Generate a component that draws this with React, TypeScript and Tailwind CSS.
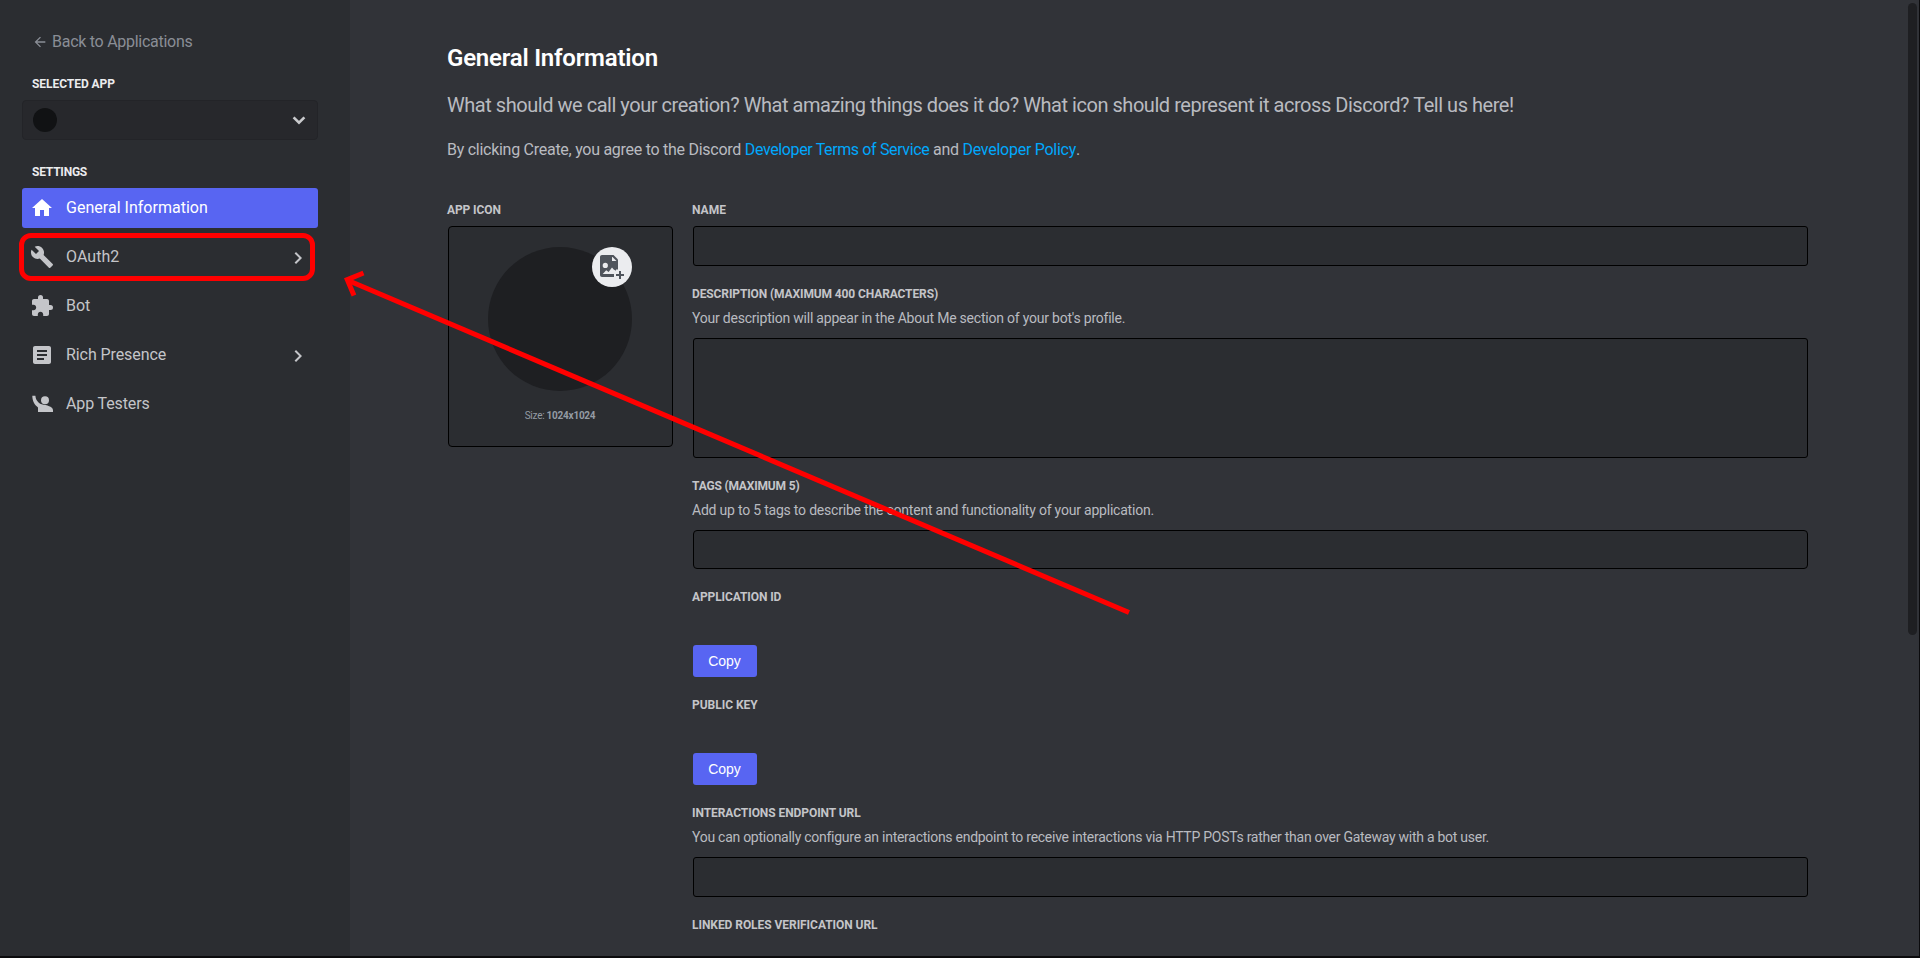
import type { ReactNode } from "react";
import { MdArrowBack, MdArticle, MdBuild, MdChevronRight, MdExtension, MdHome } from "react-icons/md";

function AppTestersIcon() {
  return (
    <svg viewBox="0 0 24 24" className="size-6" fill="currentColor">
      <circle cx="15" cy="8.2" r="4" />
      <path d="M2.3 3.8H5.4C5.6 8.2 8.6 12 13.5 12.8C19.5 13.6 23 15.6 23 18.3V20H8V15.4C4.4 13 2.3 8.6 2.3 3.8Z" />
    </svg>
  );
}

function ImagePlusIcon() {
  return (
    <svg viewBox="0 0 24 24" className="size-6">
      <path
        fill="#4f545c"
        fillRule="evenodd"
        d="M2 0H12V6H18V14.5H16V16H14V22H2C.9 22 0 21.1 0 20V2C0 .9.9 0 2 0ZM5.3 7.8A2.6 2.6 0 1 0 5.3 13A2.6 2.6 0 1 0 5.3 7.8ZM2.7 19H14V16L16 15.8L13.7 14.6L12 12.6L8.6 17L6.2 15.2Z"
      />
      <path fill="#4f545c" d="M12 0H13.5L18 4.5V6H16.5L12 1.5Z" />
      <path fill="#4f545c" d="M19 16H21V19H24V21H21V24H19V21H16V19H19Z" />
    </svg>
  );
}

function NavItem({ icon, label, active, arrow }: { icon: ReactNode; label: ReactNode; active?: boolean; arrow?: boolean }) {
  return (
    <a
      className={
        active
          ? "flex h-10 items-center rounded-[3px] bg-[#5865f2] pl-2 text-white"
          : "flex h-10 items-center rounded-[3px] pl-2 text-[#c4c5c9]"
      }
    >
      <span className="flex size-6">{icon}</span>
      <span className="ml-3 flex-1 text-base leading-5">{label}</span>
      {arrow && <MdChevronRight className="mr-2 mt-0.5 size-6" />}
    </a>
  );
}

function Label({ children }: { children: ReactNode }) {
  return <div className="-ml-px h-4 text-xs leading-4 font-bold whitespace-nowrap text-[#c4c5c9]">{children}</div>;
}

function Helper({ children }: { children: ReactNode }) {
  return <p className="-ml-px mt-2 h-4 text-sm leading-4 whitespace-nowrap text-[#b9bbc0]">{children}</p>;
}

function CopyField({ label }: { label: ReactNode }) {
  return (
    <div>
      <Label>{label}</Label>
      <button className="mt-10 block h-8 w-16 rounded-[3px] bg-[#5865f2] pr-px font-['Liberation_Sans',sans-serif] text-sm text-white">
        Copy
      </button>
    </div>
  );
}

export default function App() {
  return (
    <div className="relative flex h-[958px] w-[1920px] overflow-hidden border-r border-b-2 border-[#0b0b0d] bg-[#313338] font-[Roboto,sans-serif]">
      <aside className="w-[350px] shrink-0 bg-[#2b2d31] pr-8 pl-[22px] pt-8">
        <a className="flex h-5 items-center pl-2.5 text-base leading-5 text-[#8a8e96]">
          <MdArrowBack className="size-4" />
          <span className="ml-1 tracking-[-0.27px]">Back to Applications</span>
        </a>
        <h2 className="mt-6 ml-2.5 h-4 text-xs leading-4 font-bold tracking-[-0.05px] text-[#ebecee]">SELECTED APP</h2>
        <div className="mt-2 flex h-10 items-center justify-between rounded border border-[#232428] bg-[#27282c] pr-[11px] pl-2.5">
          <span className="size-6 rounded-full bg-[#111214]" />
          <svg viewBox="0 0 14 9" className="h-[9px] w-3.5" fill="none" stroke="#c9cacd" strokeWidth="2.6">
            <path d="M1.6 1.3L7 6.7L12.4 1.3" />
          </svg>
        </div>
        <h2 className="mt-6 ml-2.5 h-4 text-xs leading-4 font-bold tracking-[-0.22px] text-[#ebecee]">SETTINGS</h2>
        <nav className="mt-2 flex flex-col gap-[9px]">
          <NavItem active icon={<MdHome className="size-6" />} label={<span className="tracking-[0.02px]">General Information</span>} />
          <NavItem arrow icon={<MdBuild className="size-6" />} label={<span className="tracking-[0.06px]">OAuth2</span>} />
          <NavItem icon={<MdExtension className="size-6" />} label="Bot" />
          <NavItem arrow icon={<MdArticle className="size-6" />} label={<span className="tracking-[-0.08px]">Rich Presence</span>} />
          <NavItem icon={<AppTestersIcon />} label={<span className="tracking-[-0.13px]">App Testers</span>} />
        </nav>
      </aside>

      <main className="min-w-0 flex-1 pt-11 pr-[111px] pl-[98px]">
        <h1 className="-ml-px h-7 text-2xl leading-7 font-semibold tracking-[-0.22px] text-white">General Information</h1>
        <p className="-ml-px mt-[21px] h-6 text-xl leading-6 tracking-[-0.465px] whitespace-nowrap text-[#b9bbc0]">
          What should we call your creation? What amazing things does it do? What icon should represent it across Discord? Tell us here!
        </p>
        <p className="-ml-px mt-[23px] h-5 text-base leading-5 tracking-[-0.27px] whitespace-nowrap text-[#b9bbc0]">
          By clicking Create, you agree to the Discord <a className="tracking-[-0.37px] text-[#00a8fc]">Developer Terms of Service</a> and{" "}
          <a className="tracking-[-0.265px] text-[#00a8fc]">Developer Policy</a>.
        </p>

        <div className="mt-[42px] flex">
          <section className="w-[225px] shrink-0">
            <Label><span className="tracking-[-0.1px]">APP ICON</span></Label>
            <div className="mt-2 flex h-[221px] flex-col items-center rounded border border-black bg-[#2b2d31] pt-5 pr-px">
              <div className="relative size-36 rounded-full bg-[#1e1f22]">
                <div className="absolute top-0 right-0 flex size-10 items-center justify-center rounded-full bg-[#ebecef]">
                  <ImagePlusIcon />
                </div>
              </div>
              <p className="mt-[17px] h-4 text-[10px] leading-4 tracking-[-0.25px] text-[#949ba4]">
                Size: <b>1024x1024</b>
              </p>
            </div>
          </section>

          <section className="ml-5 flex min-w-0 flex-1 flex-col gap-5">
            <div>
              <Label>NAME</Label>
              <div className="mt-2 h-10 rounded-[3px] border border-black bg-[#2b2d31]" />
            </div>
            <div>
              <Label><span className="tracking-[-0.117px]">DESCRIPTION (MAXIMUM 400 CHARACTERS)</span></Label>
              <Helper><span className="tracking-[-0.218px]">Your description will appear in the About Me section of your bot's profile.</span></Helper>
              <div className="mt-3 h-[120px] rounded-[3px] border border-black bg-[#2b2d31]" />
            </div>
            <div>
              <Label><span className="tracking-[-0.18px]">TAGS (MAXIMUM 5)</span></Label>
              <Helper><span className="tracking-[-0.21px]">Add up to 5 tags to describe the content and functionality of your application.</span></Helper>
              <div className="mt-3 h-[39px] rounded-[4px] border border-black bg-[#2b2d31]" />
            </div>
            <CopyField label={<span className="tracking-[-0.1px]">APPLICATION ID</span>} />
            <CopyField label={<span className="tracking-[-0.02px]">PUBLIC KEY</span>} />
            <div>
              <Label><span className="tracking-[-0.07px]">INTERACTIONS ENDPOINT URL</span></Label>
              <Helper>
                <span className="tracking-[-0.267px]">
                  You can optionally configure an interactions endpoint to receive interactions via HTTP POSTs rather than over Gateway with a bot user.
                </span>
              </Helper>
              <div className="mt-3 h-10 rounded-[3px] border border-black bg-[#2b2d31]" />
            </div>
            <Label><span className="tracking-[-0.053px]">LINKED ROLES VERIFICATION URL</span></Label>
          </section>
        </div>
      </main>

      <div className="absolute top-[3px] right-[2px] h-[632px] w-[9px] rounded-full bg-[#1e1f22]" />
      <div className="absolute top-[233px] left-[19px] h-12 w-[296px] rounded-xl border-[5px] border-[#ff0000]" />
      <svg viewBox="0 0 1920 958" className="pointer-events-none absolute top-0 left-0 h-[958px] w-[1920px]" fill="none" stroke="#ff0000" strokeWidth="5">
        <path d="M347 280L1129 612.5" />
        <path d="M363.5 273L347.3 279.7L354 295.5" />
      </svg>
    </div>
  );
}
